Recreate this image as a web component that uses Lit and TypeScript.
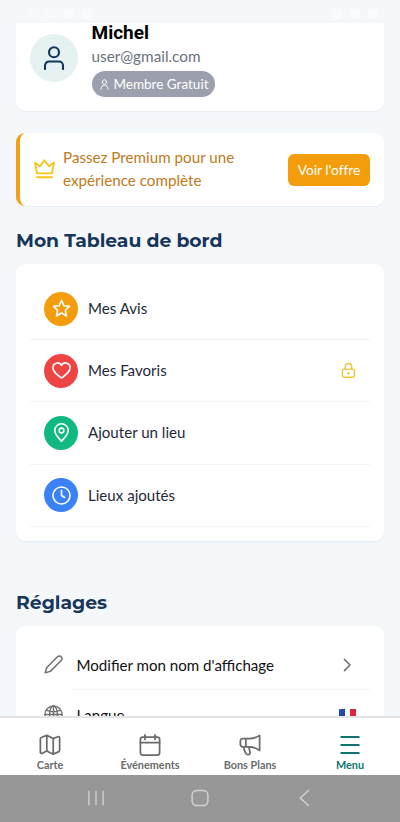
import { LitElement, html, css, svg } from "lit";
import { customElement } from "lit/decorators.js";

const icon = (size: number, width: number, body: unknown, box = "0 0 24 24") => html`
  <svg class="ico" width=${size} height=${size} viewBox=${box} fill="none" stroke="currentColor"
    stroke-width=${width} stroke-linecap="round" stroke-linejoin="round">${body}</svg>`;

const user = svg`<circle cx="12" cy="6.300" r="5"/><path d="M3 23v-3.500a4 4 0 0 1 4-4h10a4 4 0 0 1 4 4V23"/>`;
const smallUser = svg`<circle cx="12" cy="6.500" r="4.700"/><path d="M4 22.500c.3-6 3.500-9 8-9s7.700 3 8 9"/>`;
const crown = svg`<path d="M3.500 17.500L1.200 5.500l5.800 4L12 2.500l5 7 5.800-4-2.300 12zM3.500 22h17"/>`;
const star = svg`<path d="M12 1.800l3 6.700 7.200.8-5.300 4.900 1.500 7.200-6.400-3.700-6.400 3.700 1.500-7.200-5.300-4.900 7.200-.8z"/>`;
const heart = svg`<path d="M12 21.500C6 17 1.200 13.500 1.200 8.700A5.700 5.700 0 0 1 12 5.700 5.700 5.700 0 0 1 22.800 8.700C22.800 13.500 18 17 12 21.500z"/>`;
const pin = svg`<path d="M12 23C8 18.500 3.500 14.500 3.500 9.500a8.500 8.500 0 0 1 17 0C20.500 14.500 16 18.500 12 23z"/><circle cx="12" cy="9.500" r="3"/>`;
const clock = svg`<circle cx="12" cy="12" r="10.800"/><path d="M12 5.500V12l4 2.500"/>`;
const lock = svg`<rect x="3.500" y="10" width="17" height="11.500" rx="2.500"/><path d="M7.500 10V6.500a4.500 4.500 0 0 1 9 0V10"/><circle cx="12" cy="16" r=".8"/>`;
const pencil = svg`<path d="M1.500 22.500l1.800-6.500L17 2.300a3.100 3.100 0 0 1 4.700 4.700L8 20.700z"/>`;
const globe = svg`<circle cx="12" cy="12" r="10.800"/><ellipse cx="12" cy="12" rx="5" ry="10.800"/><path d="M12 1.200v21.600M1.200 12h21.600M3.500 6.800c5 2 12 2 17 0"/>`;
const chevron = svg`<path d="M8.500 4.500l7.500 7.500-7.500 7.500"/>`;
const map = svg`<path d="M1.500 5.500q0-1.500 1.500-2L8.500 1.500l7 3.500L20.500 3q2-.7 2 1.300v13.200q0 1.500-1.300 2L15.500 22l-7-3.500L3.500 21q-2 .7-2-1.300zM8.500 1.500v17M15.500 5v17"/>`;
const calendar = svg`<rect x="1.500" y="3.500" width="21" height="19.500" rx="2.500"/><path d="M1.500 9.500h21M6.500 1v5M17.500 1v5"/>`;
const horn = svg`<path d="M7.500 5h4C15.500 5 19 3.800 22.500 1.500v16.500C19 15.500 15.500 14 11.500 14H4a2.500 2.500 0 0 1-2.500-2.500v-4A2.500 2.500 0 0 1 4 5zM7.500 5v9M5 14c.3 3 1.300 5.500 2.800 7.500q1.300 1.500 3.200.8 1.800-.8.8-3-.8-2.500-.8-5.300"/>`;
const burger = svg`<path d="M2.500 3.200h19M2.500 12h19M2.500 20.800h19"/>`;

@customElement("app-root")
export class AppRoot extends LitElement {
  static styles = css`
    :host { display: flex; flex-direction: column; width: 400px; height: 822px; overflow: hidden;
      background: #f5f8fb; font-family: Lato, "Liberation Sans", sans-serif; color: #1f2937; }
    * { box-sizing: border-box; }
    .ico { display: block; flex: none; }
    .status { flex: none; height: 23px; padding: 5px 22px 0 26px; display: flex; justify-content: space-between;
      color: #f9fbfc; font: 500 12px/14px Roboto, sans-serif; }
    .status span { display: flex; align-items: center; gap: 8px; }
    .sq { width: 10px; height: 10px; border-radius: 3px; background: currentColor; }
    .content { flex: 1; min-height: 0; overflow: hidden; padding: 0 16px; }
    .card { background: #fff; border-radius: 9px; box-shadow: 0 1px 2px #1030500f; }
    .profile { height: 88px; padding: 0 14px; display: flex; gap: 13.500px; border-radius: 0 0 9px 9px; }
    .avatar { width: 48px; height: 48px; margin-top: 11px; border-radius: 50%; background: #e6f1f2; color: #12355b;
      display: grid; place-items: center; }
    .name { font: 700 19px/20px Roboto, sans-serif; color: #000; }
    .mail { font-size: 15.300px; line-height: 20px; margin-top: 3px; color: #6b7280; }
    .badge { width: 123px; height: 26px; margin-top: 5px; border-radius: 13px; background: #9ca0ae; color: #fff;
      display: flex; align-items: center; padding: 0 0 0 7px; gap: 4px; font-size: 13.500px; white-space: nowrap; }
    .premium { height: 73px; margin-top: 22px; border-left: 4px solid #f0a01a; display: flex; align-items: center;
      padding: 0 14px; color: #c17a1b; }
    .crown { color: #f5c518; margin: -2px 8px 0 0; }
    .pitch { flex: 1; font-size: 15.200px; line-height: 23px; padding-bottom: 1px; white-space: nowrap; }
    .offer { width: 82px; height: 32px; border-radius: 6px; background: #f39d0c; color: #fff; font-size: 13.700px;
      font-variant-ligatures: none; display: grid; place-items: center; padding-bottom: 1px; }
    h2 { margin: 0; font: 700 18.800px/24px Montserrat, Inter, sans-serif; color: #17365a; white-space: nowrap; }
    .dash-title { margin-top: 23px; letter-spacing: -.06px; }
    .set-title { margin-top: 50px; }
    .dash { height: 277px; margin-top: 11px; padding: 14px 14px 0; }
    .row { height: 62.200px; border-bottom: 1px solid #f3f4f6; padding: 0 14px; display: flex; align-items: center;
      gap: 10px; font-size: 15.100px; }
    .row .name-text { padding-bottom: 1px; }
    .disc { width: 34px; height: 34px; border-radius: 50%; color: #fff; display: grid; place-items: center; }
    .gold { background: #f39d0c; } .red { background: #ef4444; } .green { background: #10b981; } .blue { background: #3b82f6; }
    .lock { margin: 0 -1px 0 auto; color: #ecc733; }
    .settings { height: 200px; margin-top: 11px; padding: 14px 14px 0; }
    .srow { height: 49px; padding: 0 14px; display: flex; align-items: center; gap: 13.500px; color: #717171; }
    .srow.first { height: 49px; }
    .label { flex: 1; font-size: 15.100px; color: #111; white-space: nowrap; }
    .line { height: 1px; margin-left: 43px; background: #f3f4f6; }
    .flag { width: 17px; height: 11px; display: flex; margin-right: 0; }
    .flag i { flex: 1; } .fb { background: #2647ad; } .fr { background: #d9273f; }
    .fb { transform: skewY(-6deg); }
    .tabs { flex: none; height: 59px; background: #fff; border-top: 2px solid #e3e4e6; display: grid;
      grid-template-columns: repeat(4, 1fr); }
    .tab { display: flex; flex-direction: column; align-items: center; padding-top: 16px; gap: 2px; color: #6b6b6b;
      font-size: 10.850px; font-weight: 700; line-height: 13px; }
    .tab.on { color: #0f766e; }
    .system { flex: none; height: 47px; background: #979797; color: #d2d2d2; display: grid;
      grid-template-columns: 104px 104px 104px; justify-content: center; justify-items: center; padding-top: 14px; }
  `;

  private entry(label: string, tone: string, glyph: unknown, locked = false) {
    return html`<div class="row"><div class="disc ${tone}">${icon(19, 2, glyph)}</div><span class="name-text">${label}</span>
      ${locked ? html`<span class="lock">${icon(17, 2, lock)}</span>` : ""}</div>`;
  }

  private tab(label: string, glyph: unknown, on = false) {
    return html`<div class="tab ${on ? "on" : ""}">${icon(22, on ? 2.3 : 1.9, glyph)}<span>${label}</span></div>`;
  }

  render() {
    return html`
      <div class="status"><span>10:50<i class="sq"></i><i class="sq"></i></span>
        <span><i class="sq"></i><i class="sq"></i><i class="sq"></i></span></div>
      <div class="content">
        <section class="card profile">
          <div class="avatar">${icon(24, 2.1, user)}</div>
          <div>
            <div class="name">Michel</div>
            <div class="mail">user@gmail.com</div>
            <div class="badge">${icon(11, 2, smallUser)}Membre Gratuit</div>
          </div>
        </section>
        <section class="card premium">
          <div class="crown">${icon(21, 2.1, crown)}</div>
          <div class="pitch">Passez Premium pour une<br>expérience complète</div>
          <div class="offer">Voir l'offre</div>
        </section>
        <h2 class="dash-title">Mon Tableau de bord</h2>
        <section class="card dash">
          ${this.entry("Mes Avis", "gold", star)}
          ${this.entry("Mes Favoris", "red", heart, true)}
          ${this.entry("Ajouter un lieu", "green", pin)}
          ${this.entry("Lieux ajoutés", "blue", clock)}
        </section>
        <h2 class="set-title">Réglages</h2>
        <section class="card settings">
          <div class="srow first">${icon(19, 1.9, pencil)}<span class="label">Modifier mon nom d'affichage</span>${icon(18, 2, chevron)}</div>
          <div class="line"></div>
          <div class="srow">${icon(19, 1.8, globe)}<span class="label">Langue</span>
            <span class="flag"><i class="fb"></i><i></i><i class="fr"></i></span></div>
        </section>
      </div>
      <nav class="tabs">
        ${this.tab("Carte", map)}${this.tab("Événements", calendar)}${this.tab("Bons Plans", horn)}${this.tab("Menu", burger, true)}
      </nav>
      <div class="system">
        ${icon(18, 1.8, svg`<path d="M2.500 3v18M12 3v18M21.500 3v18"/>`)}
        ${icon(18, 2, svg`<rect x="1.500" y="2" width="21" height="20" rx="6"/>`)}
        ${icon(18, 2, svg`<path d="M18 2L7 12l11 10"/>`)}
      </div>`;
  }
}
